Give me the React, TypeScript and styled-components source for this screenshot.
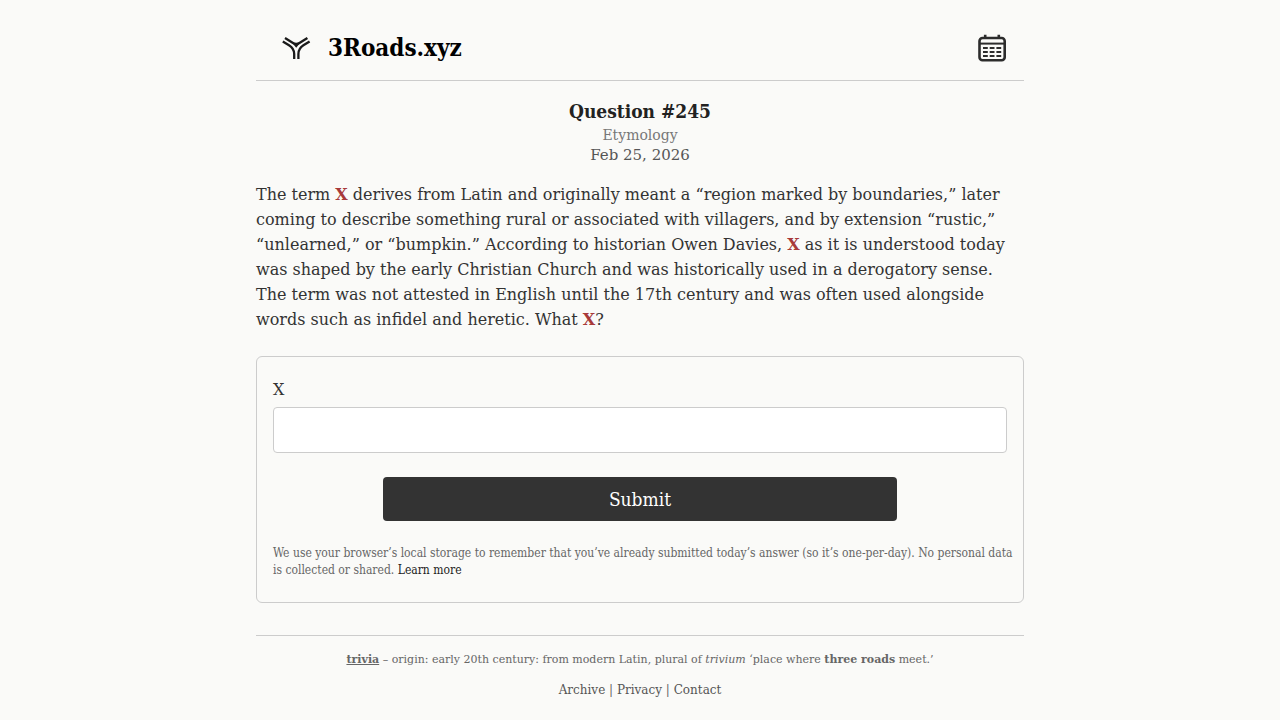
import React from "react";
import styled, { createGlobalStyle } from "styled-components";

const serif = '"DejaVu Serif", "Liberation Serif", serif';
const condensed = '"DejaVu Serif Condensed", "DejaVu Serif", serif';

const GlobalStyle = createGlobalStyle`
  *, *::before, *::after { box-sizing: border-box; }
  body { margin: 0; background: #fafaf8; color: #333; font-family: ${serif}; }
`;

const Page = styled.div`
  width: 100%;
  max-width: 768px;
  margin: 0 auto;
`;

const Header = styled.header`
  display: flex;
  align-items: center;
  justify-content: space-between;
  padding: 24px 16px 8px;
  border-bottom: 1px solid #ccc;
`;

const Brand = styled.a`
  display: flex;
  align-items: center;
  gap: 8px;
  color: #000;
  text-decoration: none;
`;

const BrandName = styled.span`
  font: bold 24px/32px ${condensed};
`;

const IconLink = styled.a`
  display: flex;
  color: #2c2c2c;
`;

const Intro = styled.div`
  display: flex;
  flex-direction: column;
  align-items: center;
  padding: 16px 0 17px;
`;

const QuestionTitle = styled.h1`
  margin: 0;
  color: #222;
  font: bold 19px/28px ${condensed};
`;

const Meta = styled.span<{ $size: number; $color: string }>`
  color: ${(p) => p.$color};
  font-size: ${(p) => p.$size}px;
  line-height: 20px;
`;

const QuestionText = styled.p`
  margin: 0 0 24px;
  font-size: 16px;
  line-height: 25px;
`;

const Unknown = styled.strong`
  color: #a83a3a;
`;

const AnswerForm = styled.form`
  display: flex;
  flex-direction: column;
  gap: 24px;
  padding: 24px 16px 23px;
  border: 1px solid #ccc;
  border-radius: 6px;
`;

const Field = styled.div`
  display: flex;
  flex-direction: column;
  gap: 8px;
`;

const Label = styled.label`
  font-size: 16px;
  line-height: 18px;
`;

const TextInput = styled.input`
  width: 100%;
  height: 46px;
  padding: 8px 12px;
  border: 1px solid #ccc;
  border-radius: 4px;
  background: #fff;
  font: 16px ${serif};
`;

const SubmitButton = styled.button`
  align-self: center;
  width: 70%;
  height: 44px;
  border: 0;
  border-radius: 4px;
  background: #333;
  color: #fff;
  font: 19px ${condensed};
  cursor: pointer;
`;

const Note = styled.p`
  margin: 0 -8px 0 0;
  color: #666;
  font: 12px/17px ${condensed};
`;

const NoteLink = styled.a`
  color: #222;
  text-decoration: none;
`;

const Footer = styled.footer`
  display: flex;
  flex-direction: column;
  align-items: center;
  gap: 10px;
  margin-top: 32px;
  padding: 14px 0;
  border-top: 1px solid #ccc;
  color: #666;
`;

const Origin = styled.p`
  margin: 0;
  font-size: 11px;
  line-height: 20px;
  text-align: center;
`;

const FooterNav = styled.nav`
  font-size: 12px;
  line-height: 20px;
`;

const FooterLink = styled.a`
  color: #555;
  text-decoration: none;
`;

const RoadsLogo = () => (
  <svg width="48" height="48" viewBox="0 0 48 48" fill="none" stroke="#1a1a1a" strokeWidth="2.3" aria-hidden="true">
    <path d="M13 14 L21 19 Q24.2 21 27.4 19 L35.4 14" />
    <path d="M19.5 18 Q24.2 20.5 28.9 18 L24.2 23.8Z" fill="#1a1a1a" stroke="none" />
    <path d="M10.8 17.4 L17 21.2 Q22.2 24.4 22.2 30 V35" />
    <path d="M37.6 17.4 L31.4 21.2 Q26.4 24.4 26.4 30 V35" />
  </svg>
);

const CalendarIcon = () => (
  <svg width="32" height="32" viewBox="0 0 32 32" fill="none" stroke="currentColor" aria-hidden="true">
    <rect x="3.5" y="6" width="25.2" height="22.2" rx="3" strokeWidth="2.6" />
    <path d="M3.5 11.6H29" strokeWidth="2" />
    <path d="M9.2 2.8V6M22.8 2.8V6" strokeWidth="2.6" />
    <path
      d="M7 16h4.8M13.7 16h4.8M20.4 16h4.8M7 20h4.8M13.7 20h4.8M20.4 20h4.8M7 24h4.8M13.7 24h4.8M20.4 24h4.8"
      strokeWidth="2.2"
    />
  </svg>
);

export default function App() {
  return (
    <>
      <GlobalStyle />
      <Page>
        <Header>
          <Brand href="#home">
            <RoadsLogo />
            <BrandName>3Roads.xyz</BrandName>
          </Brand>
          <IconLink href="#archive" aria-label="Archive calendar">
            <CalendarIcon />
          </IconLink>
        </Header>
        <main>
          <Intro>
            <QuestionTitle>Question #245</QuestionTitle>
            <Meta $size={14} $color="#777">Etymology</Meta>
            <Meta $size={15} $color="#555">Feb 25, 2026</Meta>
          </Intro>
          <QuestionText>
            The term <Unknown>X</Unknown> derives from Latin and originally meant a “region marked by
            boundaries,” later coming to describe something rural or associated with villagers, and by
            extension “rustic,” “unlearned,” or “bumpkin.” According to historian Owen Davies,{" "}
            <Unknown>X</Unknown> as it is understood today was shaped by the early Christian Church and
            was historically used in a derogatory sense. The term was not attested in English until the
            17th century and was often used alongside words such as infidel and heretic. What{" "}
            <Unknown>X</Unknown>?
          </QuestionText>
          <AnswerForm onSubmit={(e) => e.preventDefault()}>
            <Field>
              <Label htmlFor="answer">X</Label>
              <TextInput id="answer" type="text" autoComplete="off" />
            </Field>
            <SubmitButton type="submit">Submit</SubmitButton>
            <Note>
              We use your browser’s local storage to remember that you’ve already submitted today’s
              answer (so it’s one-per-day). No personal data is collected or shared.{" "}
              <NoteLink href="#privacy">Learn more</NoteLink>
            </Note>
          </AnswerForm>
        </main>
        <Footer>
          <Origin>
            <strong><u>trivia</u></strong> – origin: early 20th century: from modern Latin, plural of{" "}
            <em>trivium</em> ‘place where <strong>three roads</strong> meet.’
          </Origin>
          <FooterNav aria-label="Footer">
            <FooterLink href="#archive">Archive</FooterLink> | <FooterLink href="#privacy">Privacy</FooterLink>{" "}
            | <FooterLink href="#contact">Contact</FooterLink>
          </FooterNav>
        </Footer>
      </Page>
    </>
  );
}
